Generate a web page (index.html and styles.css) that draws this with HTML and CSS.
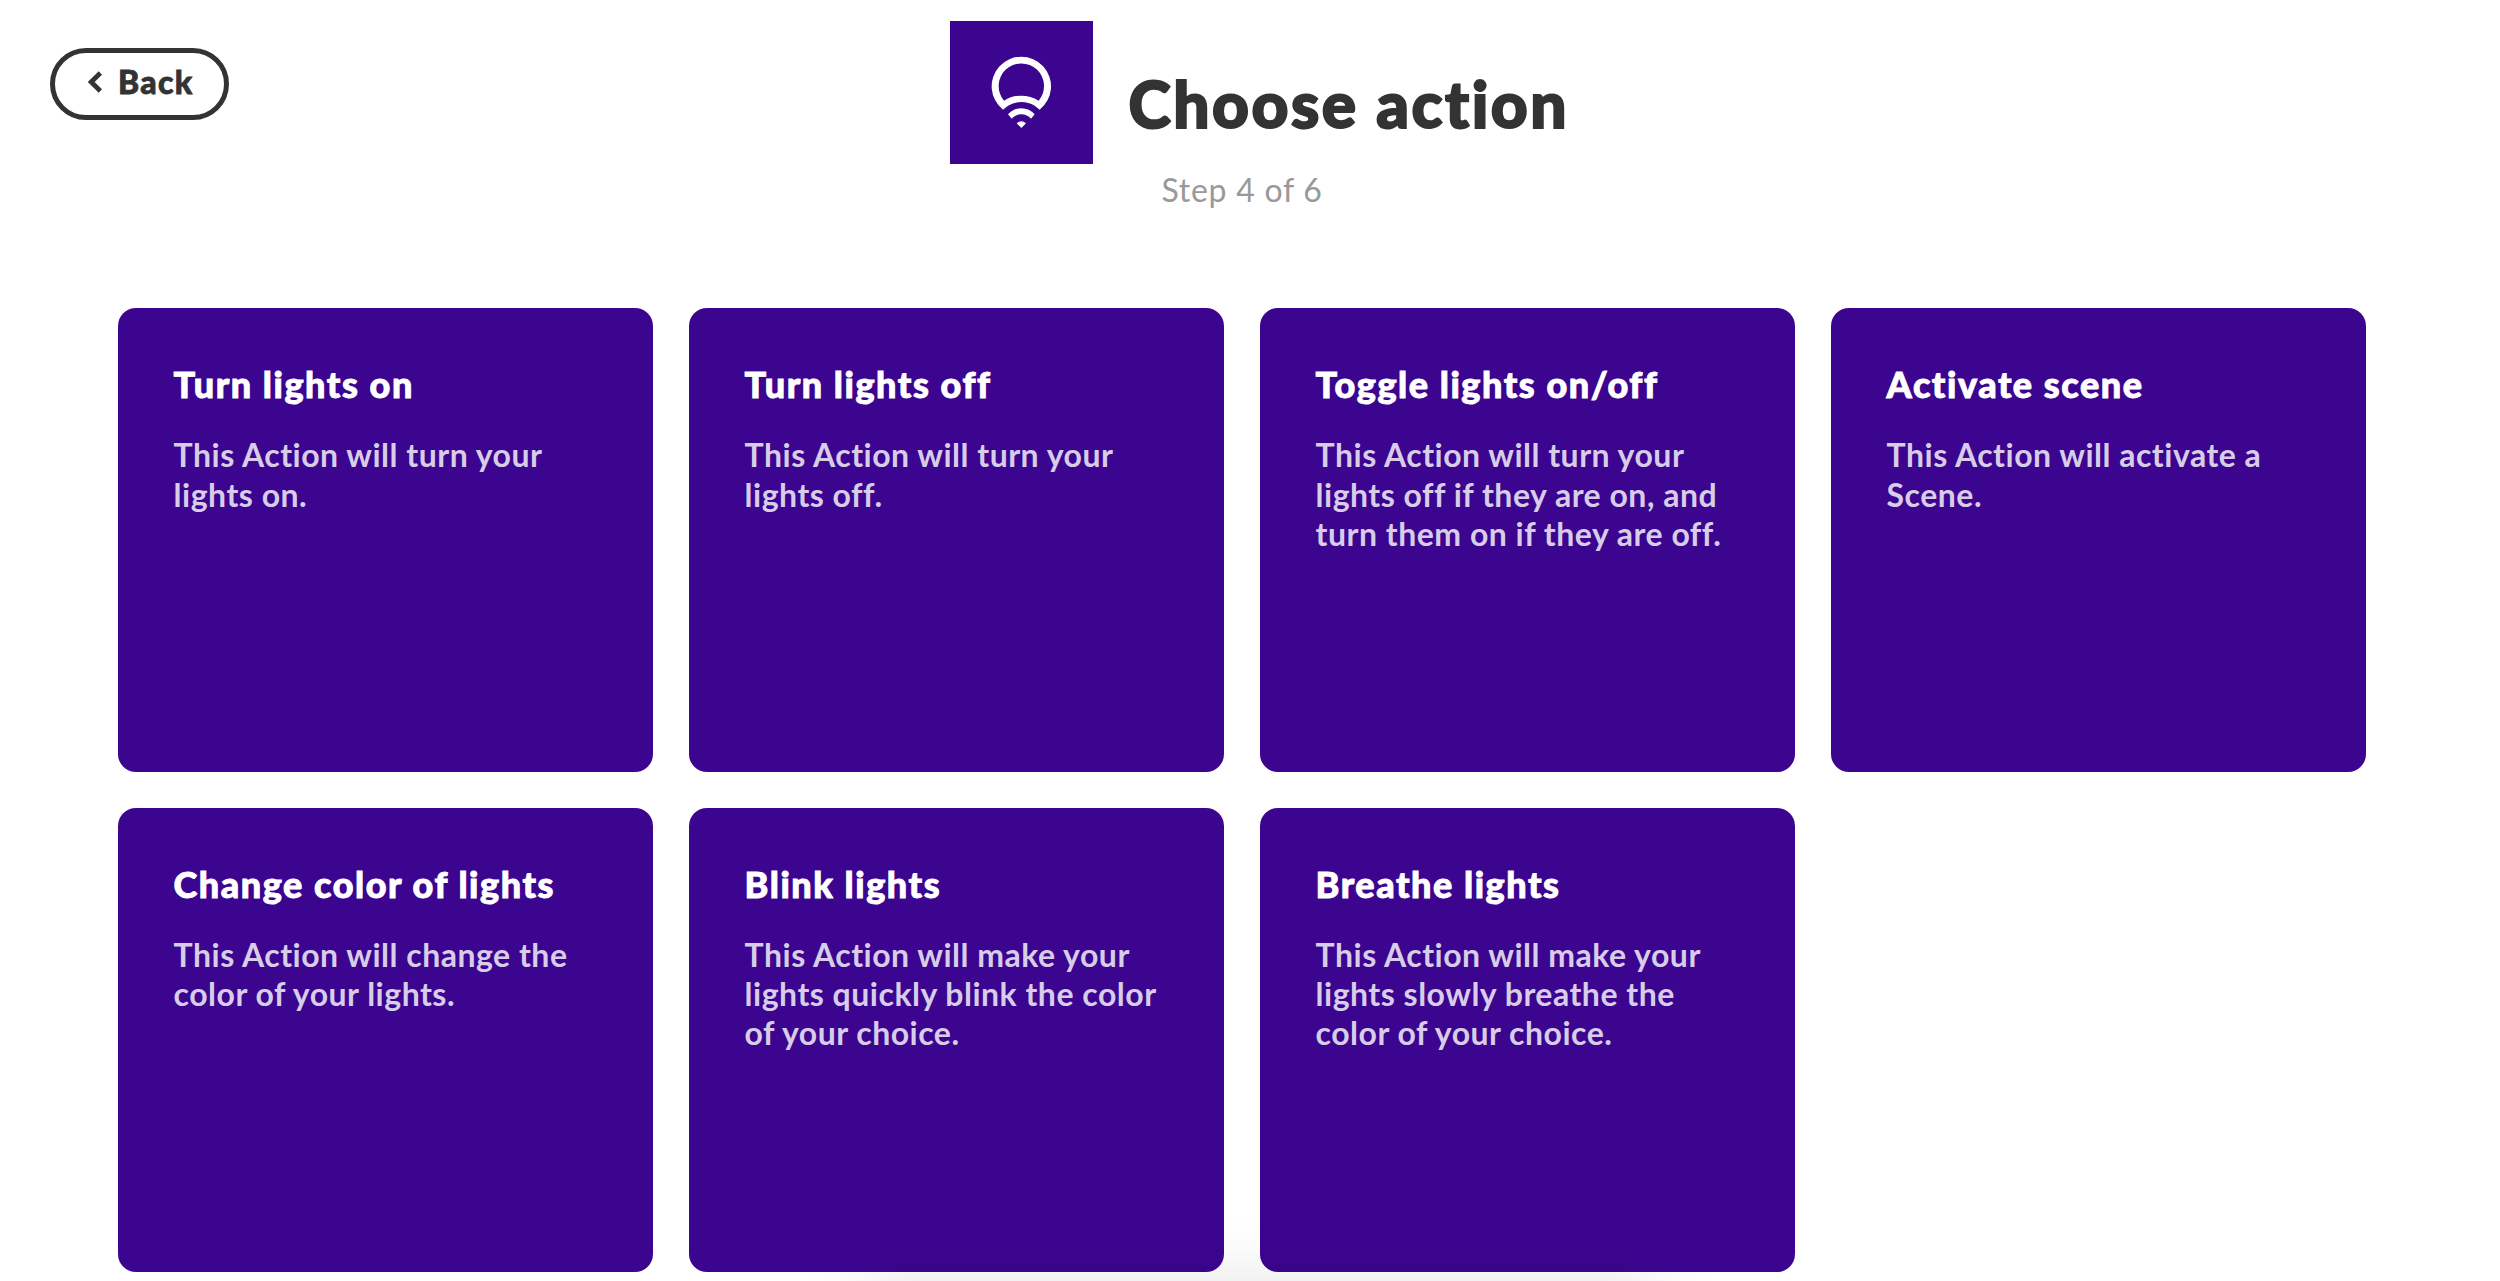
FILE: index.html
```html
<!DOCTYPE html>
<html lang="en">
<head>
    <meta charset="UTF-8">
    <meta name="viewport" content="width=device-width, initial-scale=1.0">
    <title>Choose action</title>
    <link rel="stylesheet" href="styles.css">
</head>
<body>
    <header class="header">
        <button class="back-button">
            <svg class="back-icon" viewBox="0 0 14 22"><path d="M12.4 2 L3.2 11 L12.4 20"/></svg>
            <span>Back</span>
        </button>

        <div class="title-row">
            <svg class="service-icon" viewBox="0 0 428 428">
                <path fill-rule="evenodd" d="M159 266 A89 89 0 1 1 269 266 L254 254 A78 78 0 0 0 174 254 Z M162 239 A98 98 0 0 1 266 239 A68 68 0 1 0 162 239 Z"/>
                <path d="M174 280 A53 53 0 0 1 254 280 L243 293 A39 39 0 0 0 185 293 Z"/>
                <path d="M200 307 Q214 295 228 307 L214 321 Z"/>
            </svg>
            <h1>Choose action</h1>
        </div>
        <p class="step">Step 4 of 6</p>
    </header>

    <main class="actions">
        <div class="card">
            <h2>Turn lights on</h2>
            <p>This Action will turn your<br>lights on.</p>
        </div>
        <div class="card">
            <h2>Turn lights off</h2>
            <p>This Action will turn your<br>lights off.</p>
        </div>
        <div class="card">
            <h2>Toggle lights on/off</h2>
            <p>This Action will turn your<br>lights off if they are on, and<br>turn them on if they are off.</p>
        </div>
        <div class="card">
            <h2>Activate scene</h2>
            <p>This Action will activate a<br>Scene.</p>
        </div>
        <div class="card">
            <h2>Change color of lights</h2>
            <p>This Action will change the<br>color of your lights.</p>
        </div>
        <div class="card">
            <h2>Blink lights</h2>
            <p>This Action will make your<br>lights quickly blink the color<br>of your choice.</p>
        </div>
        <div class="card">
            <h2>Breathe lights</h2>
            <p>This Action will make your<br>lights slowly breathe the<br>color of your choice.</p>
        </div>
    </main>

    <div class="bottom-shadow"></div>
</body>
</html>
```

FILE: styles.css
```css
* {
    box-sizing: border-box;
}

body {
    position: relative;
    margin: 0;
    height: 100vh;
    overflow: hidden;
    background: #fff;
    color: #333;
    font-family: 'Avenir Next', Lato, sans-serif;
    font-variant-ligatures: none;
}

h1, h2, p {
    margin: 0;
}

.header {
    height: 308.3px;
    padding: 21.3px 16px 0 0;
}

/* sits over the centered title */
.back-button {
    position: absolute;
    top: 48px;
    left: 50px;
    width: 178.5px;
    height: 71.5px;
    padding: 0 0 4px 33px;
    display: flex;
    align-items: center;
    border: 5.4px solid #333;
    border-radius: 36px;
    background: #fff;
    color: #333;
    font-family: inherit;
    font-size: 32px;
    font-weight: 900;
    line-height: 40px;
    letter-spacing: 1.3px;
    -webkit-text-stroke: 0.8px #333;
    cursor: pointer;
}

.back-icon {
    width: 14px;
    height: 22px;
    margin-right: 16px;
    fill: none;
    stroke: #333;
    stroke-width: 4.8;
}

.title-row {
    display: flex;
    justify-content: center;
    align-items: center;
    height: 142.7px;
    padding-left: 35px;
}

.service-icon {
    width: 142.7px;
    height: 142.7px;
    margin-right: 36px;
    background: #3c0590;
    fill: #fff;
}

.title-row h1 {
    padding-top: 23px;
    font-size: 64px;
    font-weight: 900;
    line-height: 80px;
    letter-spacing: 2.5px;
    -webkit-text-stroke: 2px #333;
}

.step {
    margin-top: 6px;
    color: #999;
    font-size: 32px;
    line-height: 40px;
    letter-spacing: 0.75px;
    text-align: center;
}

.actions {
    display: grid;
    grid-template-columns: repeat(4, 535.4px);
    grid-auto-rows: 464px;
    gap: 35.6px;
    padding-left: 117.6px;
}

.card {
    padding: 54px 56px;
    border-radius: 18px;
    background: #3c0590;
    white-space: nowrap;
}

.card h2 {
    color: #fff;
    font-size: 36px;
    font-weight: 900;
    line-height: 45px;
    letter-spacing: 1.55px;
    -webkit-text-stroke: 0.9px #fff;
}

.card p {
    margin-top: 28px;
    color: #d8cde9;
    font-size: 32px;
    font-weight: 700;
    line-height: 39.3px;
    letter-spacing: 0.5px;
}

/* soft shadow rising from the bottom edge of the window */
.bottom-shadow {
    position: absolute;
    bottom: 0;
    left: 900px;
    width: 720px;
    height: 0;
    box-shadow: 0 44px 72px 40px rgba(0, 0, 0, 0.12);
}
```
